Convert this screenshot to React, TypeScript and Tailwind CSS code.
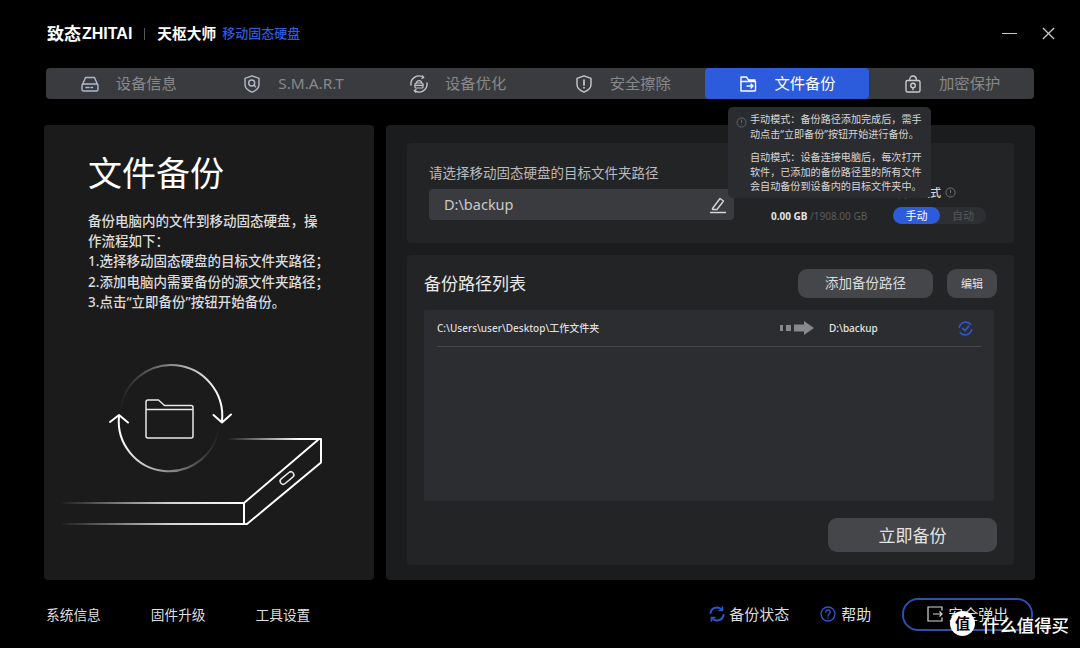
import React from "react";

const sw = { fill: "none", stroke: "currentColor", strokeWidth: 1.4, strokeLinecap: "round" as const, strokeLinejoin: "round" as const };

const DiskIcon = () => (
  <svg viewBox="0 0 20 20" className="w-5 h-5" {...sw}>
    <path d="M2.500 10.500 5.500 3.500h9l3 7" />
    <rect x="2" y="10" width="16" height="7" rx="1.500" />
    <path d="M6 13.500h3M11 13.500h1.500" />
  </svg>
);
const ShieldSearchIcon = () => (
  <svg viewBox="0 0 20 20" className="w-5 h-5" {...sw}>
    <path d="M10 1.800 17 4.300v6c0 3.800-3 6.400-7 7.900-4-1.500-7-4.100-7-7.900v-6z" />
    <circle cx="9.700" cy="9" r="3" />
    <path d="m12 11.300 1.500 1.500" />
  </svg>
);
const LockCycleIcon = () => (
  <svg viewBox="0 0 20 20" className="w-5 h-5" {...sw}>
    <path d="M2 11A8 8 0 0 1 14.500 3.400M18 9a8 8 0 0 1-12.500 7.600" />
    <path d="m13.500 1.800 1.200 1.700-1.800 1M6.500 18.200 5.300 16.500l1.800-1" strokeWidth={1.1} />
    <rect x="6" y="9" width="8" height="5" rx="1" strokeWidth={1.2} />
    <path d="M7.500 9c0-3.200 5-3.200 5 0M6 11.300h8" strokeWidth={1.2} />
  </svg>
);
const ShieldAlertIcon = () => (
  <svg viewBox="0 0 20 20" className="w-5 h-5" {...sw}>
    <path d="M10 1.800 17 4.300v6c0 3.800-3 6.400-7 7.900-4-1.500-7-4.100-7-7.900v-6z" />
    <path d="M10 6v5M10 13.500v.3" strokeWidth={1.7} />
  </svg>
);
const FolderArrowIcon = () => (
  <svg viewBox="0 0 20 20" className="w-5 h-5" {...sw}>
    <path d="M3 17V3h5.500L10.500 6H17M3 17h13.500a1 1 0 0 0 1-1V7.500H8" />
    <path d="M3 7.500h5M9 12h6M13 10l2 2-2 2" />
  </svg>
);
const LockCircleIcon = () => (
  <svg viewBox="0 0 20 20" className="w-5 h-5" {...sw}>
    <rect x="3" y="6.500" width="14" height="11.500" rx="1.500" />
    <path d="M6.500 6.500c0-6 7-6 7 0" />
    <circle cx="10" cy="11.500" r="2.300" />
    <path d="M10 13.800v2" />
  </svg>
);

const tabs = [
  { label: "设备信息", icon: <DiskIcon />, tone: "text-[#aeb9d1]" },
  { label: "S.M.A.R.T", icon: <ShieldSearchIcon />, tone: "text-[#b4bac8]" },
  { label: "设备优化", icon: <LockCycleIcon />, tone: "text-[#c4c6cc]" },
  { label: "安全擦除", icon: <ShieldAlertIcon />, tone: "text-[#c8c9cc]" },
  { label: "文件备份", icon: <FolderArrowIcon />, tone: "text-white", active: true },
  { label: "加密保护", icon: <LockCircleIcon />, tone: "text-[#c8c9cc]" },
];

const Illustration = () => (
  <svg viewBox="55 360 275 170" className="w-[275px] h-[170px] ml-[11px] mt-[49px] shrink-0" fill="none" strokeLinecap="round" strokeLinejoin="round">
    <defs>
      <linearGradient id="a1" gradientUnits="userSpaceOnUse" x1="120" y1="0" x2="222" y2="0">
        <stop offset="0" stopColor="#fff" stopOpacity="0" />
        <stop offset="0.5" stopColor="#fff" stopOpacity="0.5" />
        <stop offset="1" stopColor="#fff" />
      </linearGradient>
      <linearGradient id="a2" gradientUnits="userSpaceOnUse" x1="220" y1="0" x2="119" y2="0">
        <stop offset="0" stopColor="#fff" stopOpacity="0" />
        <stop offset="0.5" stopColor="#fff" stopOpacity="0.5" />
        <stop offset="1" stopColor="#fff" />
      </linearGradient>
      <linearGradient id="l1" gradientUnits="userSpaceOnUse" x1="227" y1="0" x2="300" y2="0">
        <stop offset="0" stopColor="#fff" stopOpacity="0" />
        <stop offset="1" stopColor="#fff" />
      </linearGradient>
      <linearGradient id="l2" gradientUnits="userSpaceOnUse" x1="60" y1="0" x2="244" y2="0">
        <stop offset="0" stopColor="#fff" stopOpacity="0" />
        <stop offset="0.6" stopColor="#fff" stopOpacity="0.8" />
        <stop offset="1" stopColor="#fff" />
      </linearGradient>
    </defs>
    <path d="M120.500 410A50 50 0 0 1 222 420" stroke="url(#a1)" strokeWidth="2" />
    <path d="M219 425A50 50 0 0 1 119 415" stroke="url(#a2)" strokeWidth="2" />
    <path d="M213.500 414 222 421.500 231 413.500" stroke="#fff" strokeWidth="2" />
    <path d="M110 421 119 414 128 421.500" stroke="#fff" strokeWidth="2" />
    <path d="M146 435V401a2 2 0 0 1 2-2h10.500l6 5.500H191a2 2 0 0 1 2 2V435a2 2 0 0 1-2 2h-43a2 2 0 0 1-2-2zM146 408.500h47" stroke="#e8e8e8" strokeWidth="1.500" />
    <path d="M227 438H319" stroke="url(#l1)" strokeWidth="2" />
    <path d="M60 502H244" stroke="url(#l2)" strokeWidth="2" />
    <path d="M63 523H246" stroke="url(#l2)" strokeWidth="2" />
    <path d="M244 502V523H247L321 461.500V438H319L244 502" stroke="#fff" strokeWidth="2" />
    <rect x="279" y="474" width="16" height="6" rx="3" transform="rotate(-40 287 477)" stroke="#e8e8e8" strokeWidth="1.500" />
  </svg>
);

const Pencil = () => (
  <svg viewBox="0 0 18 18" className="w-[18px] h-[18px] text-[#d4d5d8]" {...sw}>
    <path d="M3.500 12.500 11 2.500l3.500 2.500-6.500 8.500H3.500z" />
    <path d="M1.500 16.500h15" />
  </svg>
);

const InfoSmall = ({ c }: { c: string }) => (
  <svg viewBox="0 0 12 12" className={`w-[11px] h-[11px] ${c}`} fill="none" stroke="currentColor" strokeWidth="1">
    <circle cx="6" cy="6" r="5" />
    <path d="M6 3v3.500M6 8.300v.6" />
  </svg>
);

export default function App() {
  return (
    <div className="relative w-[1080px] h-[648px] overflow-hidden bg-black flex flex-col font-['Noto_Sans','Noto_Sans_CJK_SC',sans-serif]">
      <header className="h-[68px] shrink-0 flex items-center pl-[47px] pr-[25px] pb-[1px]">
        <span className="text-[17px] font-bold text-white leading-none">致态</span>
        <span className="ml-[1px] text-[16px] font-bold text-white leading-none font-['Liberation_Sans',sans-serif]">ZHITAI</span>
        <span className="w-px h-[12px] bg-[#55565a] ml-[12px] mr-[12px]" />
        <span className="text-[14.700px] font-bold text-white leading-none">天枢大师</span>
        <span className="text-[13px] font-medium text-[#2c5bdb] leading-none ml-[6px]">移动固态硬盘</span>
        <div className="ml-auto flex items-center gap-[25px]">
          <span className="w-[15px] h-[1.500px] bg-[#c8c8c8]" />
          <svg viewBox="0 0 14 14" className="w-[13px] h-[13px] text-[#c8c8c8]" fill="none" stroke="currentColor" strokeWidth="1.400">
            <path d="M1 1l12 12M13 1 1 13" />
          </svg>
        </div>
      </header>

      <nav className="ml-[46px] w-[988px] h-[31px] shrink-0 grid grid-cols-6 bg-[#3a3b3e] rounded-[4px]">
        {tabs.map((t) => (
          <div
            key={t.label}
            className={`flex items-center justify-center gap-[16px] rounded-[4px] ${t.active ? "bg-[#2c5bdb]" : ""}`}
          >
            <span className={t.tone}>{t.icon}</span>
            <span className={`text-[15.300px] leading-none ${t.active ? "text-white" : "text-[#87888b]"}`}>{t.label}</span>
          </div>
        ))}
      </nav>

      <main className="mt-[26px] ml-[44px] w-[991px] h-[455px] shrink-0 flex gap-[12px]">
        <section className="w-[330px] shrink-0 bg-[#1b1b1c] rounded-[4px] flex flex-col overflow-hidden">
          <h1 className="ml-[44px] mt-[26px] text-[34px] leading-[44px] font-normal text-white">文件备份</h1>
          <div className="ml-[44px] mt-[16px] w-[242px] text-[13.500px] leading-[20.200px] font-medium text-[#dcdcdc]">
            <p>备份电脑内的文件到移动固态硬盘，操作流程如下：</p>
            <p>1.选择移动固态硬盘的目标文件夹路径；</p>
            <p>2.添加电脑内需要备份的源文件夹路径；</p>
            <p>3.点击“立即备份”按钮开始备份。</p>
          </div>
          <Illustration />
        </section>

        <section className="flex-1 bg-[#1b1c1d] rounded-[4px] px-[21px] pt-[18px] flex flex-col gap-[12px]">
          <div className="h-[100px] shrink-0 bg-[#232426] rounded-[4px] pl-[22px] pt-[21px] flex">
            <div className="w-[305px] shrink-0">
              <div className="text-[13.500px] leading-[18px] text-[#b9babc]">请选择移动固态硬盘的目标文件夹路径</div>
              <div className="mt-[7px] h-[31px] rounded-[4px] bg-[#3a3b3e] flex items-center justify-between pl-[15px] pr-[7px]">
                <span className="text-[14.500px] text-[#c8c9cb] leading-none">D:\backup</span>
                <Pencil />
              </div>
            </div>
            <div className="ml-[37px] w-[215px] pt-[21px] flex flex-col">
              <div className="h-[14px] flex items-center justify-end gap-[4px] pr-[30px]">
                <span className="text-[11px] font-medium text-[#d8d8d8] leading-none">备份模式</span>
                <InfoSmall c="text-[#77787b]" />
              </div>
              <div className="mt-[8px] flex items-center justify-between">
                <span className="text-[10px] leading-none whitespace-nowrap">
                  <b className="font-bold text-[#e4e4e4]">0.00 GB</b>
                  <span className="text-[#5c5d60]"> /1908.00 GB</span>
                </span>
                <div className="w-[93px] h-[17px] rounded-full bg-[#2e2f32] flex items-center text-[11px]">
                  <span className="w-[47px] h-full rounded-full bg-[#2c5bdb] text-white flex items-center justify-center leading-none">手动</span>
                  <span className="flex-1 text-center text-[#55565a] leading-none">自动</span>
                </div>
              </div>
            </div>
          </div>

          <div className="h-[310px] shrink-0 bg-[#232426] rounded-[4px] pl-[17px] pr-[17px] pt-[14px] flex flex-col">
            <div className="h-[29px] flex items-center">
              <h2 className="text-[17px] leading-none text-[#eaeaea]">备份路径列表</h2>
              <button className="ml-auto w-[135px] h-[29px] rounded-[9px] bg-[#45464a] text-[13.500px] text-[#dcdcdc] leading-none">添加备份路径</button>
              <button className="ml-[14px] w-[50px] h-[29px] rounded-[9px] bg-[#45464a] text-[11px] text-[#e4e4e4] leading-none">编辑</button>
            </div>
            <div className="mt-[12px] w-[570px] h-[191px] bg-[#2c2d30] rounded-[2px] px-[13px]">
              <div className="h-[37px] border-b border-[#48494c] flex items-center">
                <span className="w-[343px] text-[10px] font-medium text-[#dedede] leading-none">C:\Users\user\Desktop\工作文件夹</span>
                <svg viewBox="0 0 34 14" className="w-[34px] h-[14px] text-[#87888c]" fill="currentColor">
                  <rect x="0" y="4" width="3" height="6" />
                  <rect x="6" y="4" width="5" height="6" />
                  <path d="M14 3.500h10V0l10 7-10 7v-3.500H14z" />
                </svg>
                <span className="ml-[15px] text-[10px] font-medium text-[#e4e4e4] leading-none">D:\backup</span>
                <svg viewBox="0 0 16 16" className="ml-auto mr-[8px] w-[15px] h-[15px] text-[#2f58d0]" fill="none" stroke="currentColor" strokeWidth="1.800" strokeLinecap="round" strokeLinejoin="round">
                  <path d="M1.500 6.500A7 7 0 0 1 13.500 3.500M14.500 9.500A7 7 0 0 1 2.500 12.500" />
                  <path d="m5 8 2.300 2.300L11.500 5.500" />
                </svg>
              </div>
            </div>
            <button className="mt-[17px] ml-auto w-[169px] h-[34px] rounded-[9px] bg-[#45464a] text-[17px] text-[#e4e4e4] leading-none">立即备份</button>
          </div>
        </section>
      </main>

      <footer className="flex-1 flex items-center pl-[46px] text-[#dedede]">
        <div className="flex gap-[50px] text-[13.700px] leading-none mt-[2px]">
          <span>系统信息</span>
          <span>固件升级</span>
          <span>工具设置</span>
        </div>
        <div className="ml-[399px] flex items-center">
          <svg viewBox="0 0 16 16" className="w-[16px] h-[16px] text-[#2f55c4]" fill="none" stroke="currentColor" strokeWidth="2" strokeLinecap="round">
            <path d="M1.500 7A6.500 6.500 0 0 1 13 4M14.500 9A6.500 6.500 0 0 1 3 12" />
            <path d="M13.500 1v3.500H10M2.500 15v-3.500H6" strokeWidth="1.600" />
          </svg>
          <span className="ml-[4px] text-[15px] leading-none">备份状态</span>
          <svg viewBox="0 0 16 16" className="ml-[31px] w-[16px] h-[16px] text-[#2f55c4]" fill="none" stroke="currentColor" strokeWidth="1.400" strokeLinecap="round">
            <circle cx="8" cy="8" r="7" />
            <path d="M5.800 6.200a2.200 2.200 0 1 1 3.400 1.800C8.500 8.500 8 9 8 10M8 12v.3" />
          </svg>
          <span className="ml-[5px] text-[15px] leading-none">帮助</span>
          <div className="ml-[31px] w-[131px] h-[33px] rounded-[16px] border-2 border-[#2a4fb5] flex items-center pl-[23px] gap-[5px]">
            <svg viewBox="0 0 16 16" className="w-[16px] h-[16px] text-[#d8d8d8]" fill="none" stroke="currentColor" strokeWidth="1.200">
              <path d="M15 4.500V1H1v14h14v-3.500M6 8h9M12.500 5.500 15 8l-2.500 2.500" />
            </svg>
            <span className="text-[15px] leading-none">安全弹出</span>
          </div>
        </div>
      </footer>

      <div className="absolute left-[728px] top-[107px] w-[203px] h-[91px] rounded-[5px] bg-[#2b2c2f] pl-[22px] pr-[6px] pt-[5px] text-[10.100px] leading-[14.500px] text-[#d6d6d6]">
        <span className="absolute left-[8px] top-[10px]"><InfoSmall c="text-[#66676a]" /></span>
        <p>手动模式：备份路径添加完成后，需手动点击“立即备份”按钮开始进行备份。</p>
        <p className="mt-[9px]">自动模式：设备连接电脑后，每次打开软件，已添加的备份路径里的所有文件会自动备份到设备内的目标文件夹中。</p>
      </div>

      <div className="absolute left-[950px] top-[611px] w-[25px] h-[25px] rounded-full bg-white flex items-center justify-center text-[15px] font-bold text-black leading-none">值</div>
      <div className="absolute left-[982px] top-[615px] text-[17.400px] leading-[20px] font-medium text-white whitespace-nowrap">什么值得买</div>
    </div>
  );
}
